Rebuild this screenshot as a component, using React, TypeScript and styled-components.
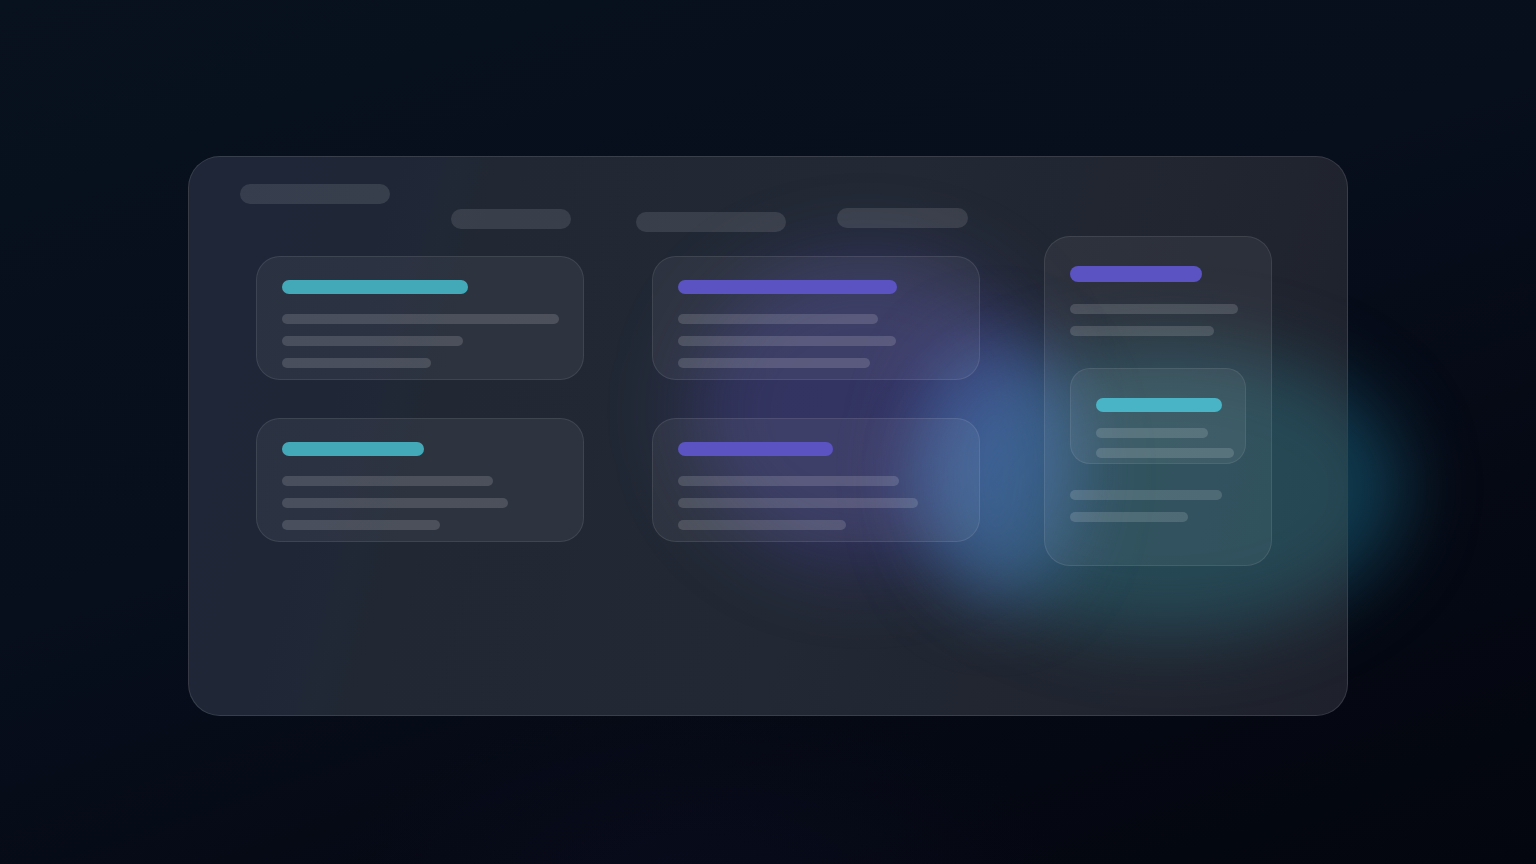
import React from "react";
import styled, { createGlobalStyle } from "styled-components";

const GlobalStyle = createGlobalStyle`
  * { box-sizing: border-box; }
  html, body { margin: 0; padding: 0; height: 100%; }
  body {
    font-family: "Inter", "Liberation Sans", sans-serif;
    background:
      radial-gradient(ellipse 520px 260px at 700px 880px, rgba(22, 20, 56, 0.22), transparent 70%),
      linear-gradient(160deg, #08111e 0%, #070e1c 45%, #050914 72%, #03060e 100%),
      #050a15;
    overflow: hidden;
  }
`;

const Page = styled.div`
  width: 1536px;
  height: 864px;
  display: flex;
  align-items: center;
  justify-content: center;
  padding-top: 8px;
`;

const Stage = styled.div`
  position: relative;
  width: 1160px;
  height: 560px;
`;

const Glow = styled.div<{ $x: number; $y: number; $w: number; $h: number; $color: string; $blur: number }>`
  position: absolute;
  left: ${(p) => p.$x - p.$w / 2}px;
  top: ${(p) => p.$y - p.$h / 2}px;
  width: ${(p) => p.$w}px;
  height: ${(p) => p.$h}px;
  border-radius: 50%;
  background: ${(p) => p.$color};
  filter: blur(${(p) => p.$blur}px);
  pointer-events: none;
`;

const Panel = styled.div`
  position: relative;
  width: 1160px;
  height: 560px;
  border-radius: 32px;
  border: 1px solid rgba(255, 255, 255, 0.11);
  overflow: hidden;
  background: linear-gradient(
    105deg,
    #1e2637 0%,
    #1f2737 16%,
    #212834 24%,
    #222934 55%,
    #20242f 85%,
    #1e212c 100%
  );
  padding: 27px 0 0 51px;
`;

const GlowLayer = styled.div`
  position: absolute;
  inset: 0;
  z-index: 0;
`;

const Content = styled.div`
  position: relative;
  z-index: 1;
`;

const LogoPill = styled.div`
  width: 150px;
  height: 20px;
  border-radius: 10px;
  background: rgba(255, 255, 255, 0.11);
`;

const NavRow = styled.div`
  display: flex;
  align-items: flex-start;
  height: 24px;
  margin-top: 4px;
`;

const NavPill = styled.div<{ $w: number; $left: number; $top: number }>`
  width: ${(p) => p.$w}px;
  height: 20px;
  margin-left: ${(p) => p.$left}px;
  margin-top: ${(p) => p.$top}px;
  border-radius: 10px;
  background: rgba(255, 255, 255, 0.11);
`;

const MainRow = styled.div`
  display: flex;
  align-items: flex-start;
  gap: 64px;
  margin: 4px 0 0 16px;
`;

const CardGrid = styled.div`
  display: grid;
  grid-template-columns: 328px 328px;
  grid-auto-rows: 124px;
  column-gap: 68px;
  row-gap: 38px;
  margin-top: 20px;
`;

const Card = styled.div`
  border-radius: 24px;
  border: 1px solid rgba(255, 255, 255, 0.09);
  background: rgba(255, 255, 255, 0.055);
  padding: 23px 25px 0;
  display: flex;
  flex-direction: column;
`;

const Title = styled.div<{ $w: number; $color: string; $h?: number }>`
  width: ${(p) => p.$w}px;
  height: ${(p) => p.$h ?? 14}px;
  border-radius: 8px;
  background: ${(p) => p.$color};
  flex: none;
`;

const Lines = styled.div<{ $gap: number; $top: number }>`
  display: flex;
  flex-direction: column;
  gap: ${(p) => p.$gap}px;
  margin-top: ${(p) => p.$top}px;
`;

const Line = styled.div<{ $w: number }>`
  width: ${(p) => p.$w}px;
  height: 10px;
  border-radius: 5px;
  background: rgba(255, 255, 255, 0.145);
`;

const SideCard = styled.div`
  width: 228px;
  height: 330px;
  border-radius: 26px;
  border: 1px solid rgba(255, 255, 255, 0.09);
  background: rgba(255, 255, 255, 0.055);
  padding: 29px 25px 0;
  display: flex;
  flex-direction: column;
`;

const InnerCard = styled.div`
  width: 176px;
  height: 96px;
  margin-top: 32px;
  border-radius: 20px;
  border: 1px solid rgba(255, 255, 255, 0.08);
  background: rgba(255, 255, 255, 0.06);
  padding: 29px 0 0 25px;
  display: flex;
  flex-direction: column;
`;

const TEAL = "#43a9b9";
const PURPLE = "#5a53c1";

type CardData = { title: number; color: string; lines: number[] };

const cards: CardData[] = [
  { title: 186, color: TEAL, lines: [277, 181, 149] },
  { title: 219, color: PURPLE, lines: [200, 218, 192] },
  { title: 142, color: TEAL, lines: [211, 226, 158] },
  { title: 155, color: PURPLE, lines: [221, 240, 168] },
];

// glow centres given in page coordinates, converted to panel coordinates
const PX = 188;
const PY = 156;

export default function App() {
  return (
    <>
      <GlobalStyle />
      <Page>
        <Stage>
          <Glow $x={1168 - PX} $y={488 - PY} $w={470} $h={290} $color="rgba(24, 92, 118, 0.6)" $blur={36} />
          <Panel>
            <GlowLayer>
              <Glow $x={865 - PX} $y={410 - PY} $w={350} $h={310} $color="rgba(96, 84, 215, 0.28)" $blur={40} />
              <Glow $x={1168 - PX} $y={488 - PY} $w={470} $h={290} $color="rgba(48, 128, 142, 0.4)" $blur={36} />
              <Glow $x={995 - PX} $y={470 - PY} $w={170} $h={270} $color="rgba(84, 128, 210, 0.38)" $blur={34} />
            </GlowLayer>
            <Content>
              <LogoPill />
              <NavRow>
                <NavPill $w={120} $left={211} $top={1} />
                <NavPill $w={150} $left={65} $top={4} />
                <NavPill $w={131} $left={51} $top={0} />
              </NavRow>
              <MainRow>
                <CardGrid>
                  {cards.map((c, i) => (
                    <Card key={i}>
                      <Title $w={c.title} $color={c.color} />
                      <Lines $gap={12} $top={20}>
                        {c.lines.map((w, j) => (
                          <Line key={j} $w={w} />
                        ))}
                      </Lines>
                    </Card>
                  ))}
                </CardGrid>
                <SideCard>
                  <Title $w={132} $color={PURPLE} $h={16} />
                  <Lines $gap={12} $top={22}>
                    <Line $w={168} />
                    <Line $w={144} />
                  </Lines>
                  <InnerCard>
                    <Title $w={126} $color="#48b4c6" />
                    <Lines $gap={10} $top={16}>
                      <Line $w={112} />
                      <Line $w={138} />
                    </Lines>
                  </InnerCard>
                  <Lines $gap={12} $top={26}>
                    <Line $w={152} />
                    <Line $w={118} />
                  </Lines>
                </SideCard>
              </MainRow>
            </Content>
          </Panel>
        </Stage>
      </Page>
    </>
  );
}
